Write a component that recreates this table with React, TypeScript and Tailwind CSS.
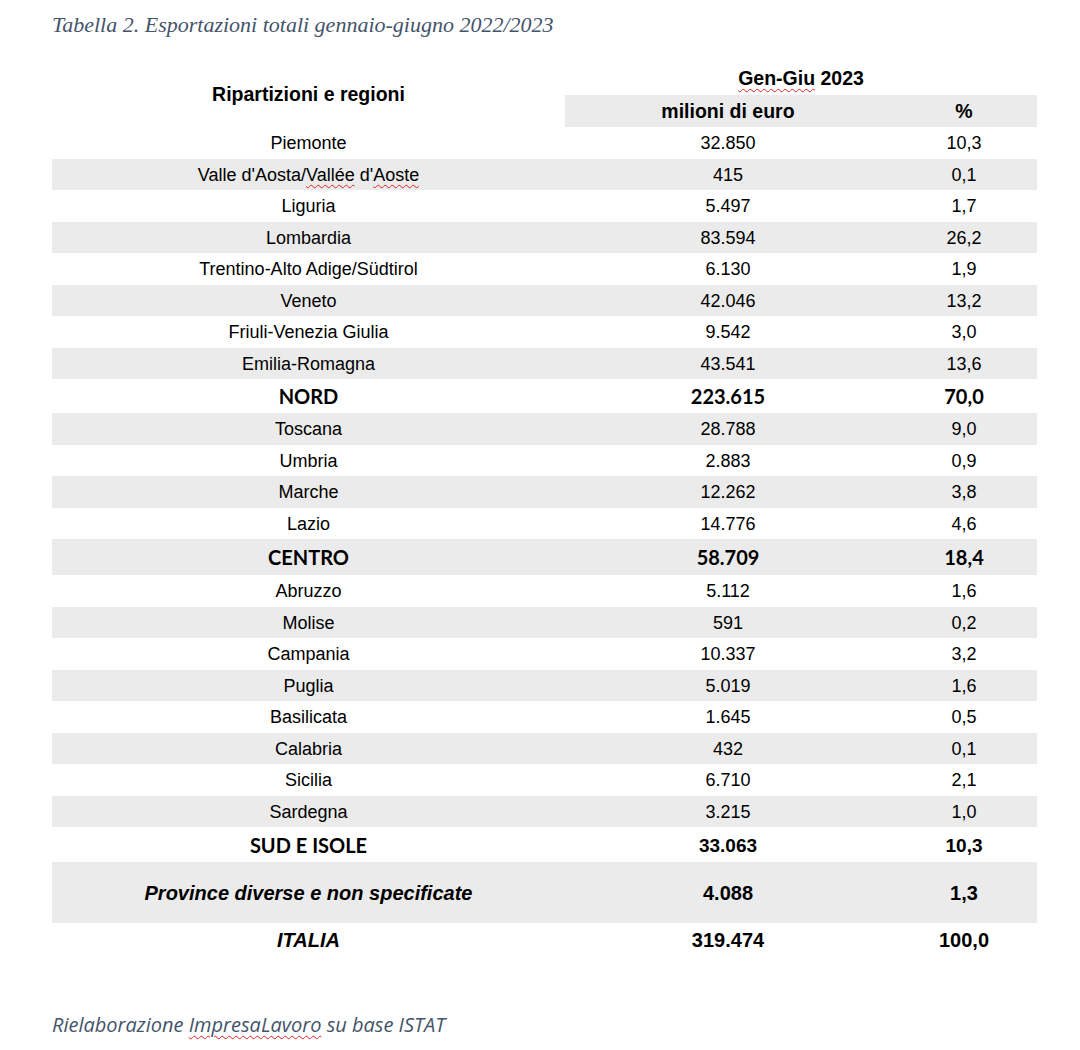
import React from "react";

type Row = {
  name: React.ReactNode;
  val: string;
  pct: string;
  kind?: "normal" | "total";
  h: string;
};

const arial = "font-['Liberation_Sans',Arial,sans-serif]";
const lato = "font-['Lato','Liberation_Sans',sans-serif]";
const squiggle = "underline decoration-wavy decoration-[#d22] decoration-1 underline-offset-[3px]";

const rows: Row[] = [
  { name: "Piemonte", val: "32.850", pct: "10,3", h: "h-[31.5px]" },
  {
    name: (
      <span>
        Valle d'Aosta/<span className={squiggle}>Vallée</span> d'<span className={squiggle}>Aoste</span>
      </span>
    ),
    val: "415",
    pct: "0,1",
    h: "h-[31.5px]",
  },
  { name: "Liguria", val: "5.497", pct: "1,7", h: "h-[31.5px]" },
  { name: "Lombardia", val: "83.594", pct: "26,2", h: "h-[31.5px]" },
  { name: "Trentino-Alto Adige/Südtirol", val: "6.130", pct: "1,9", h: "h-[31.5px]" },
  { name: "Veneto", val: "42.046", pct: "13,2", h: "h-[31.5px]" },
  { name: "Friuli-Venezia Giulia", val: "9.542", pct: "3,0", h: "h-[31.5px]" },
  { name: "Emilia-Romagna", val: "43.541", pct: "13,6", h: "h-[31.5px]" },
  { name: "NORD", val: "223.615", pct: "70,0", kind: "total", h: "h-[34px]" },
  { name: "Toscana", val: "28.788", pct: "9,0", h: "h-[31.5px]" },
  { name: "Umbria", val: "2.883", pct: "0,9", h: "h-[31.5px]" },
  { name: "Marche", val: "12.262", pct: "3,8", h: "h-[31.5px]" },
  { name: "Lazio", val: "14.776", pct: "4,6", h: "h-[31.5px]" },
  { name: "CENTRO", val: "58.709", pct: "18,4", kind: "total", h: "h-[36px]" },
  { name: "Abruzzo", val: "5.112", pct: "1,6", h: "h-[31.5px]" },
  { name: "Molise", val: "591", pct: "0,2", h: "h-[31.5px]" },
  { name: "Campania", val: "10.337", pct: "3,2", h: "h-[31.5px]" },
  { name: "Puglia", val: "5.019", pct: "1,6", h: "h-[31.5px]" },
  { name: "Basilicata", val: "1.645", pct: "0,5", h: "h-[31.5px]" },
  { name: "Calabria", val: "432", pct: "0,1", h: "h-[31.5px]" },
  { name: "Sicilia", val: "6.710", pct: "2,1", h: "h-[31.5px]" },
  { name: "Sardegna", val: "3.215", pct: "1,0", h: "h-[31.5px]" },
];

function DataRow({ r, gray }: { r: Row; gray: boolean }) {
  const bg = gray ? "bg-[#ebebeb]" : "bg-white";
  const font =
    r.kind === "total"
      ? `${lato} font-bold text-[20px]`
      : `${arial} text-[18px] pt-[2px]`;
  return (
    <div className={`grid grid-cols-[513px_326px_146px] ${r.h} ${bg} text-black`}>
      <div className={`flex items-center justify-center ${font}`}>{r.name}</div>
      <div className={`flex items-center justify-center ${font}`}>{r.val}</div>
      <div className={`flex items-center justify-center ${font}`}>{r.pct}</div>
    </div>
  );
}

export default function App() {
  return (
    <div className="w-[1080px] h-[1050px] bg-white overflow-hidden">
      <div className="pl-[52px] pt-[13px]">
        <div className="h-[24px] leading-[24px] text-[22px] italic text-[#44546a] font-['Liberation_Serif','Times_New_Roman',serif]">
          Tabella 2. Esportazioni totali gennaio-giugno 2022/2023
        </div>
      </div>

      <div className="ml-[52px] mt-[26px] w-[985px]">
        {/* header */}
        <div className={`grid grid-cols-[513px_326px_146px] grid-rows-[32px_32px] ${arial} font-bold text-[19.5px] text-black`}>
          <div className="row-span-2 flex items-center justify-center">Ripartizioni e regioni</div>
          <div className="col-span-2 flex items-center justify-center">
            <span>
              <span className={squiggle}>Gen-Giu</span> 2023
            </span>
          </div>
          <div className="flex items-center justify-center bg-[#ebebeb] pt-[2px]">milioni di euro</div>
          <div className="flex items-center justify-center bg-[#ebebeb] pt-[2px]">%</div>
        </div>

        {rows.map((r, i) => (
          <DataRow key={i} r={r} gray={i % 2 === 1} />
        ))}

        <div className="grid grid-cols-[513px_326px_146px] h-[35px] bg-white text-black">
          <div className={`flex items-center justify-center ${lato} font-bold text-[20px]`}>SUD E ISOLE</div>
          <div className={`flex items-center justify-center pt-[4px] ${arial} font-bold text-[19px]`}>33.063</div>
          <div className={`flex items-center justify-center pt-[4px] ${arial} font-bold text-[19px]`}>10,3</div>
        </div>
        <div className={`grid grid-cols-[513px_326px_146px] h-[61px] bg-[#ebebeb] text-black ${arial} font-bold text-[20px]`}>
          <div className="flex items-center justify-center italic">Province diverse e non specificate</div>
          <div className="flex items-center justify-center">4.088</div>
          <div className="flex items-center justify-center">1,3</div>
        </div>
        <div className={`grid grid-cols-[513px_326px_146px] h-[34px] bg-white text-black ${arial} font-bold text-[20px]`}>
          <div className="flex items-center justify-center italic">ITALIA</div>
          <div className="flex items-center justify-center">319.474</div>
          <div className="flex items-center justify-center">100,0</div>
        </div>
      </div>

      <div className="pl-[52px] mt-[56px]">
        <div className="h-[24px] leading-[24px] text-[20px] italic text-[#44546a] font-['Open_Sans','Noto_Sans',sans-serif]">
          Rielaborazione <span className={squiggle}>ImpresaLavoro</span> su base ISTAT
        </div>
      </div>
    </div>
  );
}
